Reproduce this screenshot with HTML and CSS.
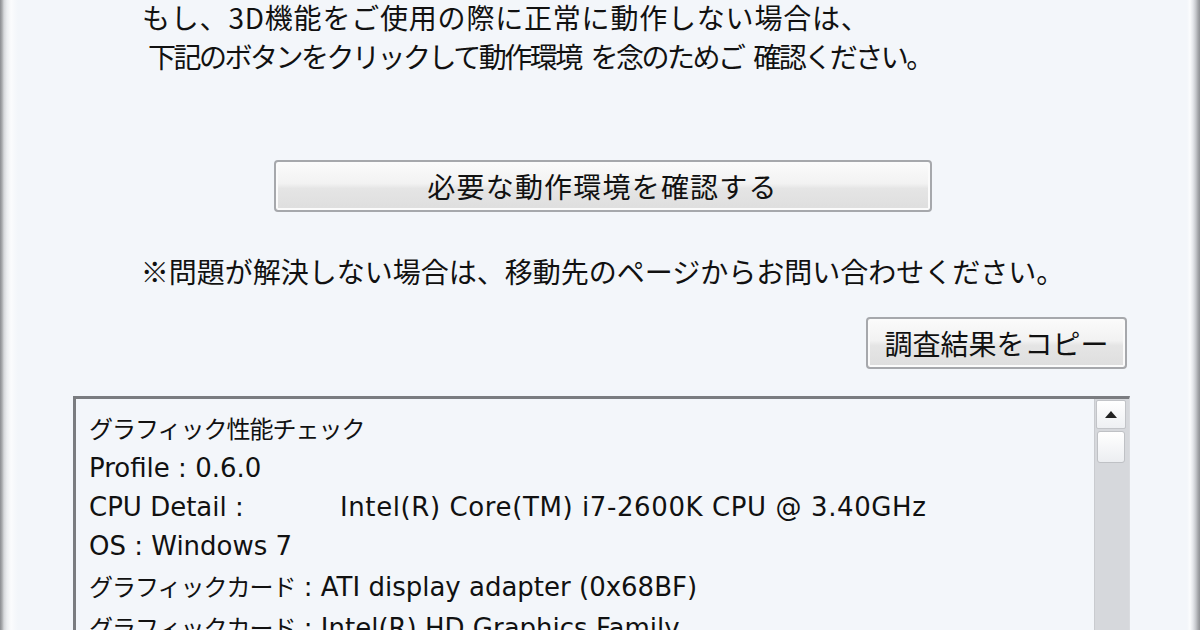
FILE: index.html
```html
<!DOCTYPE html>
<html lang="ja">
<head>
    <meta charset="UTF-8">
    <meta name="viewport" content="width=device-width, initial-scale=1.0">
    <title>グラフィック性能チェック</title>
    <link rel="stylesheet" href="styles.css">
</head>
<body>
    <div class="window">
        <div class="frame frame-left"></div>

        <div class="content">
            <div class="intro">
                <p class="intro-first">もし、3D機能をご使用の際に正常に動作しない場合は、</p>
                <p class="intro-second">下記のボタンをクリックして動作環境 を念のためご 確認ください。</p>
            </div>

            <div class="check-row">
                <button class="btn btn-wide">必要な動作環境を確認する</button>
            </div>

            <p class="note">※問題が解決しない場合は、移動先のページからお問い合わせください。</p>

            <div class="panel">
                <div class="copy-row">
                    <button class="btn btn-copy">調査結果をコピー</button>
                </div>

                <div class="result-box">
                    <div class="result-text">
                        <div class="line"><span class="ja">グラフィック性能チェック</span></div>
                        <div class="line">Profile : 0.6.0</div>
                        <div class="line cpu"><span class="cpu-label">CPU Detail :</span><span class="cpu-value">Intel(R) Core(TM) i7-2600K CPU @ 3.40GHz</span></div>
                        <div class="line">OS : Windows 7</div>
                        <div class="line"><span class="ja">グラフィックカード</span> : ATI display adapter (0x68BF)</div>
                        <div class="line"><span class="ja">グラフィックカード</span> : Intel(R) HD Graphics Family</div>
                    </div>
                    <div class="scrollbar">
                        <div class="scroll-btn">
                            <svg width="12" height="7" viewBox="0 0 12 7"><path d="M0 7 L6 0 L12 7 Z" fill="#222"/></svg>
                        </div>
                        <div class="scroll-thumb"></div>
                        <div class="scroll-track"></div>
                    </div>
                </div>
            </div>
        </div>

        <div class="frame frame-right"></div>
    </div>
</body>
</html>
```

FILE: styles.css
```css
body {
    margin: 0;
    background-color: #f3f6fa;
    color: #111111;
    font-family: "Noto Sans CJK JP", "DejaVu Sans", sans-serif;
    overflow: hidden;
}

.window {
    display: flex;
    height: 630px;
    overflow: hidden;
}

.frame {
    flex: none;
}

.frame-left {
    width: 18px;
    background: linear-gradient(to right, #8a8c90 0, #a9abae 2px, #d6d8db 4px, #eceef1 7px, #fbfcfd 11px, #f6f8fb 15px, #f3f6fa 18px);
}

.frame-right {
    width: 13px;
    background: linear-gradient(to right, #f3f6fa 0, #fbfcfd 3px, #e4e6ea 6px, #c3c5c9 9px, #a4a6aa 11px, #8e9094 13px);
}

.content {
    flex: 1;
    display: flex;
    flex-direction: column;
}

.intro {
    margin-top: -2px;
    padding-left: 124px;
    font-size: 28px;
    line-height: 39px;
}

.intro p {
    margin: 0;
    white-space: pre;
}

.intro-first {
    letter-spacing: 0.8px;
}

.intro-second {
    padding-left: 6px;
    letter-spacing: -2.5px;
    word-spacing: 6px;
}

.check-row {
    display: flex;
    justify-content: center;
    margin-top: 84px;
}

.btn {
    font-family: inherit;
    color: #111111;
    font-size: 28px;
    height: 52px;
    padding: 0;
    border: 2px solid #a6a8ac;
    border-radius: 4px;
    background: linear-gradient(to bottom, #fbfbfb 0%, #f2f2f2 45%, #e5e5e5 55%, #dedede 100%);
    box-shadow: inset 0 0 0 2px #fbfbfb;
    cursor: pointer;
}

.btn-wide {
    width: 658px;
    letter-spacing: 1.2px;
}

.note {
    margin: 40px 0 0;
    text-align: center;
    font-size: 28px;
    line-height: 39px;
}

.panel {
    display: flex;
    flex-direction: column;
    padding: 0 57px 0 55px;
}

.copy-row {
    display: flex;
    justify-content: flex-end;
    margin-top: 26px;
    padding-right: 3px;
}

.btn-copy {
    width: 261px;
}

.result-box {
    display: flex;
    margin-top: 27px;
    height: 260px;
    border-top: 3px solid #7a7c80;
    border-left: 3px solid #7a7c80;
    border-right: 1px solid #dadce0;
    background-color: #f3f6fa;
}

.result-text {
    flex: 1;
    padding: 9px 0 0 13px;
    font-family: "DejaVu Sans", "Noto Sans CJK JP", sans-serif;
    font-size: 26px;
    line-height: 39px;
}

.line {
    white-space: pre;
}

.ja {
    font-family: "Noto Sans CJK JP", sans-serif;
    font-size: 24px;
    letter-spacing: -1px;
}

.cpu {
    display: flex;
}

.cpu-label {
    width: 251px;
}

.cpu-value {
    letter-spacing: 0.6px;
}

.scrollbar {
    width: 32px;
    display: flex;
    flex-direction: column;
    padding: 0 2px 0 0;
    background-color: #d6d8dc;
    border-left: 1px solid #c9cbcf;
}

.scroll-btn {
    height: 27px;
    margin: 1px 1px 0;
    display: flex;
    align-items: center;
    justify-content: center;
    background: linear-gradient(to bottom, #ffffff, #eef0f3);
    border: 1px solid #c2c4c8;
    border-radius: 2px;
}

.scroll-thumb {
    height: 30px;
    margin: 2px 2px 0;
    background: linear-gradient(to bottom, #ffffff, #eceef1);
    border: 1px solid #bfc1c5;
    border-radius: 3px;
}

.scroll-track {
    flex: 1;
}
```
